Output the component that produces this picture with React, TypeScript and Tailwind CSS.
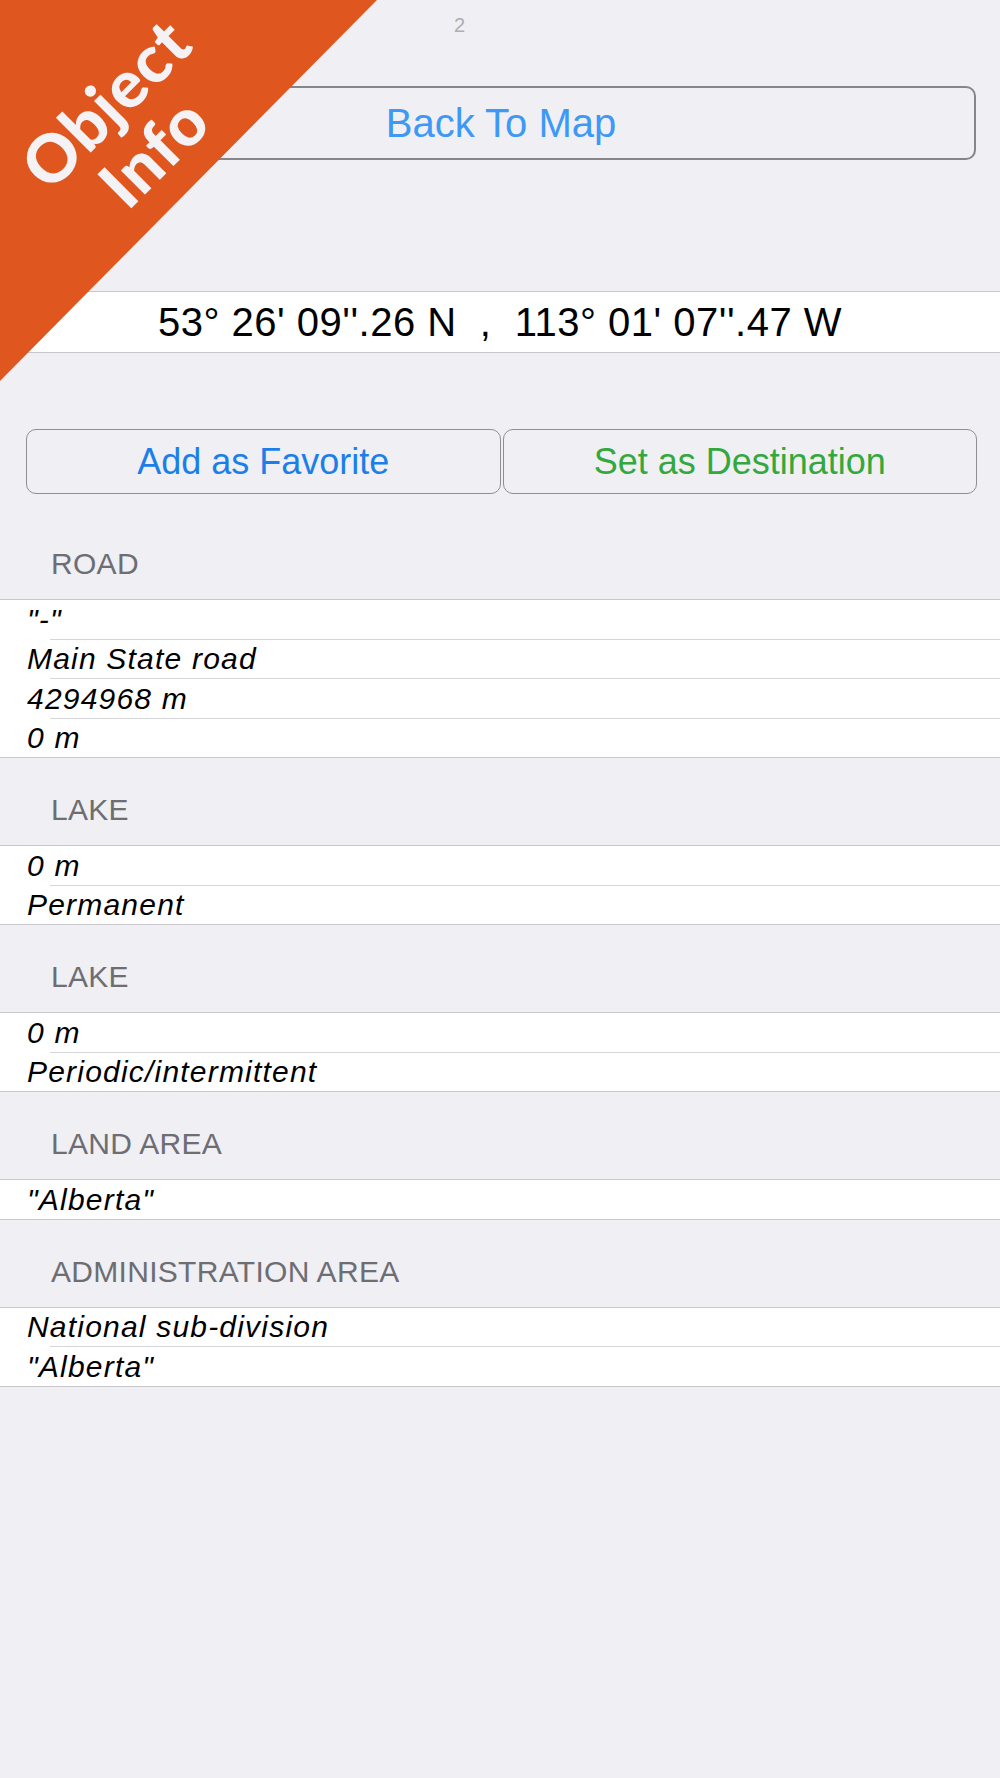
const sections = [
  { title: "ROAD", rows: ['"-"', "Main State road", "4294968 m", "0 m"] },
  { title: "LAKE", rows: ["0 m", "Permanent"] },
  { title: "LAKE", rows: ["0 m", "Periodic/intermittent"] },
  { title: "LAND AREA", rows: ['"Alberta"'] },
  { title: "ADMINISTRATION AREA", rows: ["National sub-division", '"Alberta"'] },
];

function Section({ title, rows }: { title: string; rows: string[] }) {
  return (
    <div>
      <div className="flex h-[87px] items-end pb-[17px] pl-[51px]">
        <span className="text-[30px] leading-[36px] tracking-[0.3px] text-[#6d6d72]">{title}</span>
      </div>
      <div className="border-y border-[#c8c7cc] bg-white">
        {rows.map((row, i) => (
          <div key={i}>
            {i > 0 && <div className="ml-[50px] h-px bg-[#d6d5da]" />}
            <div className="flex h-[38.5px] items-center pl-[27px] text-[30px] italic tracking-[1.2px] text-black">
              {row}
            </div>
          </div>
        ))}
      </div>
    </div>
  );
}

export default function App() {
  return (
    <div className="relative min-h-[1778px] overflow-hidden bg-[#efeff4] font-['Liberation_Sans',Arial,sans-serif]">
      <div className="h-[86px] pl-[454px] pt-[10px]">
        <span className="text-[20px] text-[#6d6d72] opacity-50">2</span>
      </div>

      <div className="ml-[26px] mr-[24px] flex h-[74px] items-center justify-center rounded-[10px] border-2 border-[#86868a]">
        <span className="text-[40px] text-[#3d99f5]">Back To Map</span>
      </div>

      <div className="mt-[131px] flex h-[62px] items-center justify-center border-y border-[#c8c7cc] bg-white">
        <span className="whitespace-pre text-[40px] tracking-[0.5px] text-black">
          {"53° 26' 09''.26 N  ,  113° 01' 07''.47 W"}
        </span>
      </div>

      <div className="ml-[26px] mr-[23px] mt-[76px] flex h-[65px] gap-[2px]">
        <div className="flex flex-1 items-center justify-center rounded-[10px] border-[1.5px] border-[#8e8e93]">
          <span className="text-[36px] text-[#1b7fea]">Add as Favorite</span>
        </div>
        <div className="flex flex-1 items-center justify-center rounded-[10px] border-[1.5px] border-[#8e8e93]">
          <span className="text-[36px] text-[#33a93d]">Set as Destination</span>
        </div>
      </div>

      <div className="pt-[18px]">
        {sections.map((s, i) => (
          <Section key={i} title={s.title} rows={s.rows} />
        ))}
      </div>

      <div className="pointer-events-none absolute left-0 top-0">
        <svg width="380" height="384" viewBox="0 0 380 384">
          <polygon points="0,0 377,0 0,381" fill="#df561e" />
        </svg>
      </div>
      <div className="pointer-events-none absolute left-[129px] top-[127px]">
        <div className="-translate-x-1/2 -translate-y-1/2 -rotate-45 whitespace-nowrap text-center font-['Lato',sans-serif] text-[66px] font-black leading-[68px] tracking-[1px] text-[#f4f2f4]">
          <div>Object</div>
          <div>Info</div>
        </div>
      </div>
    </div>
  );
}
